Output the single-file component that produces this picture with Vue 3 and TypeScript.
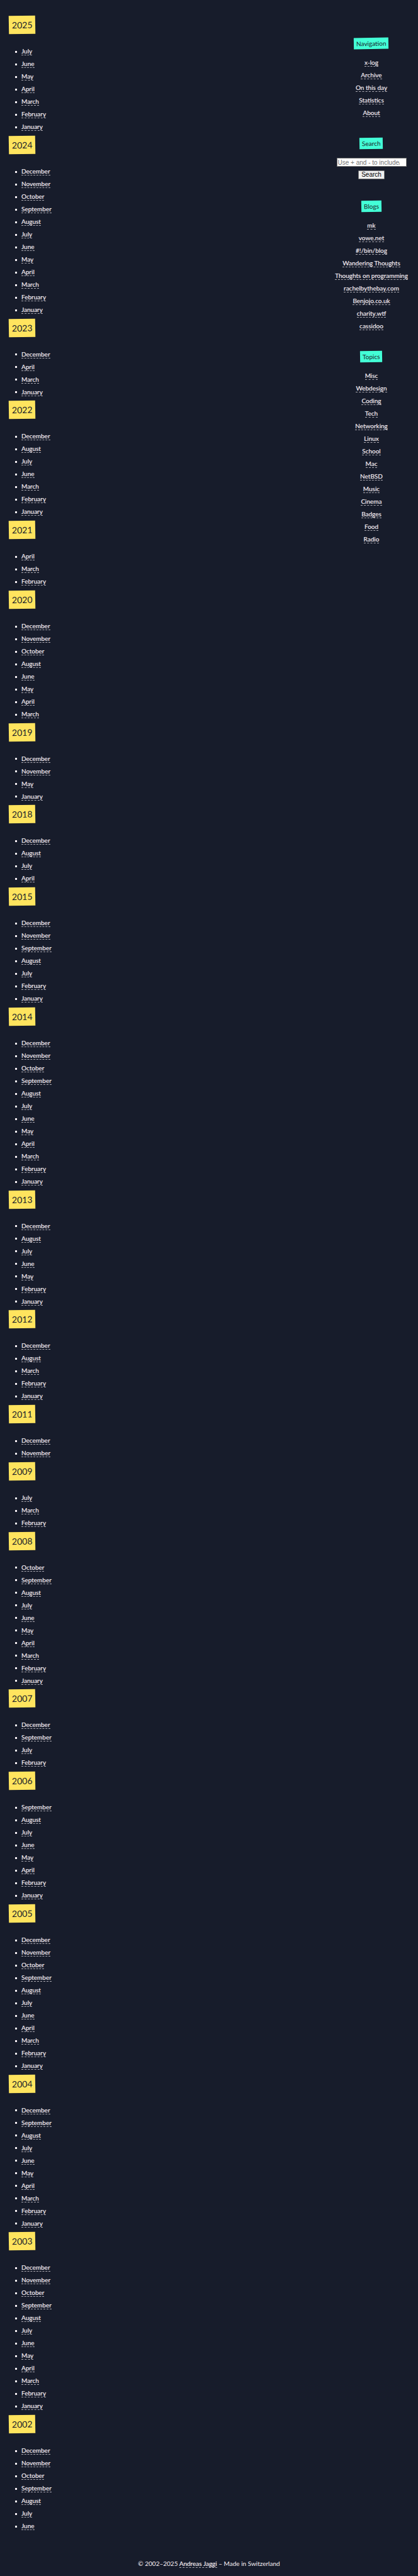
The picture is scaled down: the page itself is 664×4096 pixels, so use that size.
<script setup lang="ts">
interface Year {
  year: number
  months: string[]
}

interface LinkGroup {
  title: string
  links: string[]
}

const names: Record<string, string> = {
  Jan: 'January',
  Feb: 'February',
  Mar: 'March',
  Apr: 'April',
  May: 'May',
  Jun: 'June',
  Jul: 'July',
  Aug: 'August',
  Sep: 'September',
  Oct: 'October',
  Nov: 'November',
  Dec: 'December',
}

const entry = (year: number, months: string): Year => ({
  year,
  months: months.split(' ').map((m) => names[m]),
})

const years: Year[] = [
  entry(2025, 'Jul Jun May Apr Mar Feb Jan'),
  entry(2024, 'Dec Nov Oct Sep Aug Jul Jun May Apr Mar Feb Jan'),
  entry(2023, 'Dec Apr Mar Jan'),
  entry(2022, 'Dec Aug Jul Jun Mar Feb Jan'),
  entry(2021, 'Apr Mar Feb'),
  entry(2020, 'Dec Nov Oct Aug Jun May Apr Mar'),
  entry(2019, 'Dec Nov May Jan'),
  entry(2018, 'Dec Aug Jul Apr'),
  entry(2015, 'Dec Nov Sep Aug Jul Feb Jan'),
  entry(2014, 'Dec Nov Oct Sep Aug Jul Jun May Apr Mar Feb Jan'),
  entry(2013, 'Dec Aug Jul Jun May Feb Jan'),
  entry(2012, 'Dec Aug Mar Feb Jan'),
  entry(2011, 'Dec Nov'),
  entry(2009, 'Jul Mar Feb'),
  entry(2008, 'Oct Sep Aug Jul Jun May Apr Mar Feb Jan'),
  entry(2007, 'Dec Sep Jul Feb'),
  entry(2006, 'Sep Aug Jul Jun May Apr Feb Jan'),
  entry(2005, 'Dec Nov Oct Sep Aug Jul Jun Apr Mar Feb Jan'),
  entry(2004, 'Dec Sep Aug Jul Jun May Apr Mar Feb Jan'),
  entry(2003, 'Dec Nov Oct Sep Aug Jul Jun May Apr Mar Feb Jan'),
  entry(2002, 'Dec Nov Oct Sep Aug Jul Jun'),
]

const navigation: LinkGroup = {
  title: 'Navigation',
  links: ['x-log', 'Archive', 'On this day', 'Statistics', 'About'],
}

const groups: LinkGroup[] = [
  {
    title: 'Blogs',
    links: [
      'mk',
      'vowe.net',
      '#!/bin/blog',
      'Wandering Thoughts',
      'Thoughts on programming',
      'rachelbythebay.com',
      'Benjojo.co.uk',
      'charity.wtf',
      'cassidoo',
    ],
  },
  {
    title: 'Topics',
    links: [
      'Misc',
      'Webdesign',
      'Coding',
      'Tech',
      'Networking',
      'Linux',
      'School',
      'Mac',
      'NetBSD',
      'Music',
      'Cinema',
      'Badges',
      'Food',
      'Radio',
    ],
  },
]
</script>

<template>
  <div class="page">
    <div class="columns">
      <main class="archive">
        <section v-for="y in years" :key="y.year" class="year">
          <h2 class="year-title">{{ y.year }}</h2>
          <ul class="months">
            <li v-for="m in y.months" :key="m"><a href="#">{{ m }}</a></li>
          </ul>
        </section>
      </main>

      <aside class="side">
        <nav class="group">
          <h3 class="tag">{{ navigation.title }}</h3>
          <ul class="links">
            <li v-for="l in navigation.links" :key="l"><a href="#">{{ l }}</a></li>
          </ul>
        </nav>

        <section class="group">
          <h3 class="tag">Search</h3>
          <form class="search" @submit.prevent>
            <input type="text" aria-label="Search terms" placeholder="Use + and - to include/exclude" />
            <button type="submit">Search</button>
          </form>
        </section>

        <section v-for="g in groups" :key="g.title" class="group">
          <h3 class="tag">{{ g.title }}</h3>
          <ul class="links">
            <li v-for="l in g.links" :key="l"><a href="#">{{ l }}</a></li>
          </ul>
        </section>
      </aside>
    </div>

    <footer class="footer">© 2002–2025 <a href="#">Andreas Jaggi</a> – Made in Switzerland</footer>
  </div>
</template>

<style>
body {
  margin: 0;
  background: #171c2b;
}
</style>

<style scoped>
.page {
  box-sizing: border-box;
  display: flex;
  flex-direction: column;
  min-height: 100vh;
  background: #171c2b;
  color: #f7f0f5;
  font-family: Lato, "Open Sans", sans-serif;
  font-size: 10px;
  line-height: 20px;
}

.columns {
  flex: 1;
  display: flex;
  justify-content: space-between;
}

.archive {
  display: flex;
  flex-direction: column;
  justify-content: space-between;
  padding: 25px 0 0 14px;
}

.year-title {
  width: fit-content;
  margin: 0 0 17px;
  padding: 0 5px;
  background: #ffe45e;
  color: #171c2b;
  font-size: 14px;
  font-weight: 400;
  line-height: 29px;
  transform: rotate(-1deg);
}

.months,
.links {
  margin: 0;
  padding: 0;
  list-style: none;
}

.months {
  padding: 0 0 4px 10px;
}

.months li::before {
  content: "";
  display: inline-block;
  width: 3px;
  height: 3px;
  margin-right: 7px;
  vertical-align: middle;
  background: #f7f0f5;
}

a {
  color: inherit;
  text-decoration: none;
  text-shadow: 0 0 1px rgba(247, 240, 245, 0.4);
  border-bottom: 1px dashed #a9a7b0;
}

.side {
  display: flex;
  flex-direction: column;
  gap: 30px;
  width: 148px;
  padding-top: 60px;
  text-align: center;
}

.group {
  display: flex;
  flex-direction: column;
  align-items: center;
}

.tag {
  margin: 0 0 11px;
  padding: 0 4px;
  background: #43ffd6;
  color: #171c2b;
  font-size: 10px;
  font-weight: 400;
  line-height: 18px;
  transform: rotate(-1deg);
}

.search {
  display: flex;
  flex-direction: column;
  align-items: center;
  gap: 6px;
  padding: 3px 0 4px;
}

.search input,
.search button {
  box-sizing: border-box;
  height: 14px;
  margin: 0;
  border: 1px solid #767676;
  font-family: "Liberation Sans", Arial, sans-serif;
  font-size: 10px;
  line-height: 12px;
}

.search input {
  width: 111px;
  padding: 0 10px 0 1px;
  background: #fff;
}

.search input::placeholder {
  color: #757575;
  opacity: 1;
}

.search button {
  padding: 0 4px;
  border-radius: 1px;
  background: #efefef;
  color: #000;
}

.footer {
  padding: 36px 0 10px;
  text-align: center;
}
</style>
